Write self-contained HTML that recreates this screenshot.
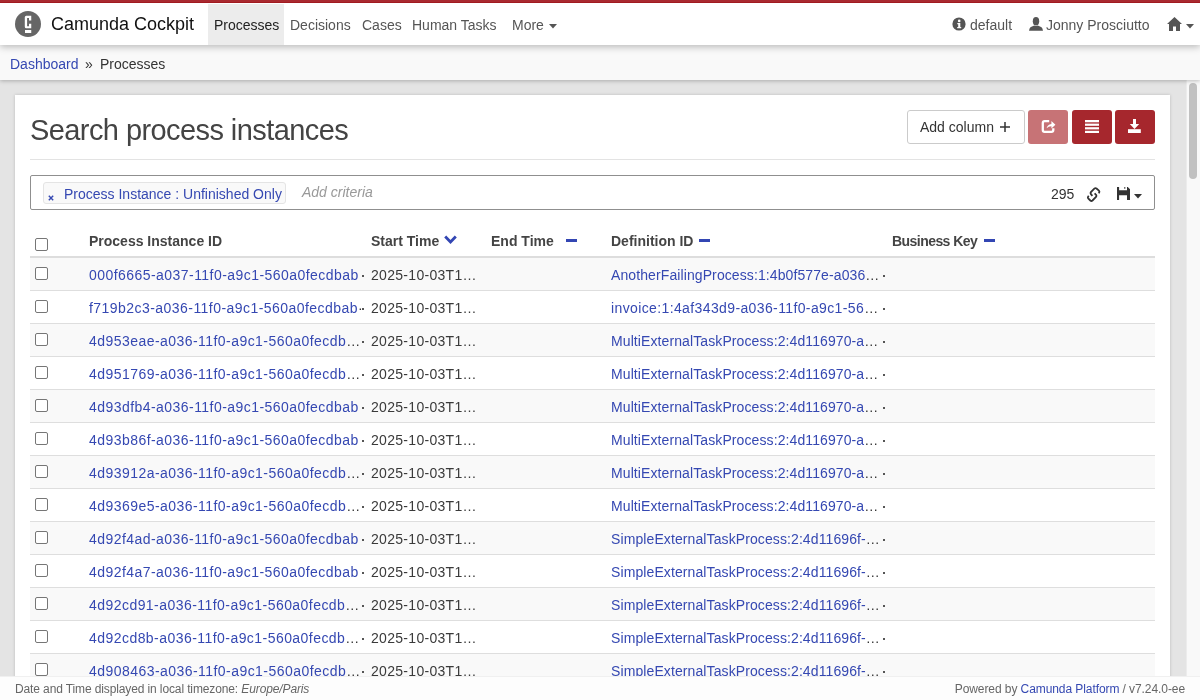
<!DOCTYPE html>
<html><head><meta charset="utf-8">
<style>
*{box-sizing:border-box;margin:0;padding:0}
html,body{width:1200px;height:700px;overflow:hidden;background:#fff;font-family:"Liberation Sans",sans-serif;font-size:14px;color:#333}
a{color:#3548b2;text-decoration:none}
.abs{position:absolute}
#topbar{position:absolute;left:0;top:0;width:1200px;height:3px;background:#a92a30;border-bottom:1px solid #a11a20;z-index:5}
#nav{will-change:transform;position:absolute;left:0;top:3px;width:1200px;height:42px;background:#fff;z-index:3;box-shadow:0 2px 7px rgba(0,0,0,.26)}
.t{position:absolute;white-space:nowrap;line-height:16px}
#crumb{will-change:transform;position:absolute;left:0;top:45px;width:1200px;height:35px;background:#f9f9f9;z-index:2;box-shadow:0 1px 4px rgba(0,0,0,.25)}
#content{position:absolute;left:0;top:80px;width:1200px;height:596px;background:#e4e4e4;overflow:hidden}
#sbar{position:absolute;left:1186px;top:80px;width:14px;height:596px;background:#f9f9f9;border-left:1px solid #ececec;z-index:1}
#thumb{position:absolute;left:1189px;top:83px;width:8px;height:96px;border-radius:4px;background:#c1c1c1;z-index:1}
#panel{position:absolute;left:15px;top:95px;width:1155px;height:700px;background:#fff;box-shadow:0 0 3px rgba(0,0,0,.18)}
#footer{will-change:transform;position:absolute;left:0;top:676px;width:1200px;height:24px;background:#fdfdfd;border-top:1px solid #f0f0f0;z-index:4;font-size:12px;color:#666}
.btn{position:absolute;top:110px;height:34px;border-radius:3px}
.red{background:#a6272d;width:40px}
.row{position:absolute;left:30px;width:1125px;height:33px;border-bottom:1px solid #dedede}
.row.odd{background:#f9f9f9}
.cb{position:absolute;width:13px;height:13px;border:1px solid #767676;border-radius:2px;background:#fff}
.cell{position:absolute;top:9px;white-space:nowrap;overflow:hidden;text-overflow:ellipsis;line-height:16px;color:#3a3a3a}
.dot{position:absolute;top:17px;width:2px;height:2px;background:#555}
.hd{position:absolute;top:233px;font-weight:bold;color:#444;white-space:nowrap;line-height:16px}
#main{position:absolute;left:0;top:0;width:1200px;height:700px;z-index:1;will-change:transform}
.lid{letter-spacing:0.45px}
.ldef{letter-spacing:0.1px}
.st{letter-spacing:0.3px}
.ell{color:#333}
.minus{position:absolute;top:239px;width:11px;height:3px;background:#3346b3}
</style></head><body>
<div id="topbar"></div>
<div id="nav">
  <svg class="abs" style="left:15px;top:8px" width="26" height="26" viewBox="0 0 26 26">
    <circle cx="13" cy="13" r="13" fill="#666"/>
    <path d="M11.3 4.8 H16.25 V9.4 H14 V6.9 H12.1 V15.2 H14 V12.75 H16.25 V17.3 H11.3 Q9.8 17.3 9.8 15.8 V6.3 Q9.8 4.8 11.3 4.8 Z" fill="#fff"/>
    <rect x="10" y="19" width="6.25" height="3" fill="#fff"/>
  </svg>
  <div class="t" style="left:51px;top:11px;font-size:18px;line-height:20px;color:#111">Camunda Cockpit</div>
  <div class="abs" style="left:208px;top:1px;width:76px;height:41px;background:#ececec"></div>
  <div class="t" style="left:214px;top:14px;color:#222">Processes</div>
  <div class="t" style="left:290px;top:14px;color:#555">Decisions</div>
  <div class="t" style="left:362px;top:14px;color:#555">Cases</div>
  <div class="t" style="left:412px;top:14px;color:#555">Human Tasks</div>
  <div class="t" style="left:512px;top:14px;color:#555">More</div>
  <svg class="abs" style="left:549px;top:21px" width="8" height="5"><path d="M0 0H8L4 4.5Z" fill="#555"/></svg>

  <svg class="abs" style="left:952px;top:14px" width="14" height="14" viewBox="0 0 14 14"><circle cx="7" cy="7" r="6.6" fill="#555"/><circle cx="7.2" cy="3.9" r="1.3" fill="#fff"/><path d="M5.3 6H8.3V10H9.2V11.3H5.2V10H6.2V7.2H5.3Z" fill="#fff"/></svg>
  <div class="t" style="left:970px;top:14px;color:#555">default</div>
  <svg class="abs" style="left:1029px;top:14px" width="14" height="14" viewBox="0 0 14 14"><ellipse cx="7" cy="4.2" rx="3.2" ry="4.2" fill="#555"/><path d="M0 13.8 L0.6 11.5 Q1.2 10 3 9.5 L5.2 8.6 Q7 9.6 8.8 8.6 L11 9.5 Q12.8 10 13.4 11.5 L14 13.8 Z" fill="#555"/></svg>
  <div class="t" style="left:1046px;top:14px;color:#555">Jonny Prosciutto</div>
  <svg class="abs" style="left:1167px;top:14px" width="15" height="14" viewBox="0 0 15 14"><path d="M7.5 0 L15 7 H13 V14 H9 V9.5 H6 V14 H2 V7 H0 Z" fill="#555"/></svg>
  <svg class="abs" style="left:1186px;top:21px" width="8" height="5"><path d="M0 0H8L4 4.5Z" fill="#555"/></svg>
</div>

<div id="crumb">
  <div class="t" style="left:10px;top:11px"><a>Dashboard</a></div>
  <div class="t" style="left:85px;top:11px;color:#333">»</div>
  <div class="t" style="left:100px;top:11px;color:#333">Processes</div>
</div>

<div id="content">
</div>
<div id="sbar"></div>
<div id="thumb"></div>
<div id="panel"></div>
<div id="main">
  <div class="t" style="left:30px;top:114px;font-size:29px;line-height:32px;letter-spacing:-0.58px;color:#444">Search process instances</div>
  <div class="abs" style="left:30px;top:159px;width:1125px;height:1px;background:#e3e3e3"></div>
  <div class="btn" style="left:907px;width:118px;border:1px solid #cbcbcb;background:#fff"></div>
  <div class="t" style="left:920px;top:119px;color:#333">Add column</div>
  <svg class="abs" style="left:1000px;top:122px" width="10" height="10" viewBox="0 0 10 10"><path d="M4.25 0H5.75V4.25H10V5.75H5.75V10H4.25V5.75H0V4.25H4.25Z" fill="#333"/></svg>
  <div class="btn red" style="left:1028px;background:#c77376"></div>
  <div class="btn red" style="left:1072px"></div>
  <div class="btn red" style="left:1115px"></div>
  <!-- share icon -->
  <svg class="abs" style="left:1041px;top:119px" width="16" height="16" viewBox="0 0 16 16">
    <path d="M8.2 2.2 H3.6 Q1.8 2.2 1.8 4 V10.9 Q1.8 12.8 3.6 12.8 H10.4 Q12.3 12.8 12.3 10.9 V9.2" fill="none" stroke="#fff" stroke-width="2.3"/>
    <path d="M5.6 9.3 Q6.3 5.6 10.4 4.9 V2 L14.4 5.8 L10.4 9.4 V7.3 Q7.8 7.2 5.6 9.3Z" fill="#fff"/>
  </svg>
  <!-- list icon -->
  <svg class="abs" style="left:1085px;top:120px" width="14" height="13" viewBox="0 0 14 13">
    <rect x="0" y="0" width="14" height="2.3" fill="#fff"/><rect x="0" y="3.6" width="14" height="2.2" fill="#fff"/><rect x="0" y="7.2" width="14" height="2.2" fill="#fff"/><rect x="0" y="10.8" width="14" height="2.2" fill="#fff"/>
  </svg>
  <!-- download icon -->
  <svg class="abs" style="left:1128px;top:119px" width="13" height="14" viewBox="0 0 13 14">
    <path d="M5 0 H8 V5 H11.2 L6.5 10 L1.8 5 H5Z" fill="#fff"/>
    <rect x="0" y="10.2" width="12.8" height="3.8" fill="#fff"/>
  </svg>

  <div class="abs" style="left:30px;top:175px;width:1125px;height:35px;border:1px solid #8f8f8f;border-radius:2px;background:#fff"></div>
  <div class="abs" style="left:43px;top:182px;width:243px;height:22px;border:1px solid #e4e4e4;border-radius:3px;background:#f9f9f9"></div>
  <svg class="abs" style="left:48px;top:195px" width="6" height="6" viewBox="0 0 6 6"><path d="M0.8 0.8L5.2 5.2M5.2 0.8L0.8 5.2" stroke="#3548b2" stroke-width="1.4"/></svg>
  <div class="t" style="left:64px;top:186px"><a>Process Instance : Unfinished Only</a></div>
  <div class="t" style="left:302px;top:184px;font-style:italic;color:#999">Add criteria</div>
  <div class="t" style="left:1051px;top:186px;color:#333">295</div>
  <svg class="abs" style="left:1084px;top:185px" width="20" height="20" viewBox="0 0 20 20">
    <path d="M14.6 8.3 L15.2 7.5 Q15.8 6.5 14.9 5.6 L12.5 3.5 Q11.4 2.7 10.3 3.6 L6.9 7.1 Q6.1 8.2 6.9 9.2 L8.4 10.9" fill="none" stroke="#333" stroke-width="1.8"/>
    <path d="M10.6 8.3 L12.2 10 Q12.8 11 12 12 L8.5 15.5 Q7.4 16.4 6.3 15.5 L4.2 13.4 Q3.5 12.5 4.2 11.5 L4.8 10.8" fill="none" stroke="#333" stroke-width="1.8"/>
  </svg>
  <svg class="abs" style="left:1117px;top:187px" width="13" height="13" viewBox="0 0 13 13">
    <path d="M0 0 H2.1 V3.2 H10 V0 H10.8 L13 2.3 V13 H10 V8.2 H2.1 V13 H0 Z" fill="#333"/>
    <rect x="7.3" y="0" width="1" height="1.8" fill="#333"/>
  </svg>
  <svg class="abs" style="left:1134px;top:194px" width="8" height="5"><path d="M0 0H8L4 4.5Z" fill="#333"/></svg>

  <div class="cb" style="left:35px;top:238px"></div>
  <div class="hd" style="left:89px">Process Instance ID</div>
  <div class="hd" style="left:371px">Start Time</div>
  <svg class="abs" style="left:444px;top:235px" width="13" height="9" viewBox="0 0 13 9"><path d="M1.2 1.5 L6.5 7 L11.8 1.5" fill="none" stroke="#3346b3" stroke-width="2.8"/></svg>
  <div class="hd" style="left:491px">End Time</div>
  <div class="minus" style="left:566px"></div>
  <div class="hd" style="left:611px">Definition ID</div>
  <div class="minus" style="left:699px"></div>
  <div class="hd" style="left:892px;letter-spacing:-0.55px">Business Key</div>
  <div class="minus" style="left:984px"></div>
  <div class="abs" style="left:30px;top:256px;width:1125px;height:2px;background:#dddddd"></div>
  <div class="row odd" style="top:258px">
    <div class="cb" style="left:5px;top:9px"></div>
    <div class="cell" style="left:59px"><a class="lid">000f6665-a037-11f0-a9c1-560a0fecdbab</a></div><div class="dot" style="left:332px"></div>
    <div class="cell st" style="left:341px">2025-10-03T1…</div>
    <div class="cell" style="left:581px"><a class="ldef">AnotherFailingProcess:1:4b0f577e-a036</a><span class="ell">…</span></div><div class="dot" style="left:853px"></div>
  </div>
  <div class="row" style="top:291px">
    <div class="cb" style="left:5px;top:9px"></div>
    <div class="cell" style="left:59px"><a class="lid">f719b2c3-a036-11f0-a9c1-560a0fecdbab</a><span class="ell" style="letter-spacing:-1px">·</span></div><div class="dot" style="left:332px"></div>
    <div class="cell st" style="left:341px">2025-10-03T1…</div>
    <div class="cell" style="left:581px"><a class="ldef" style="letter-spacing:0.38px">invoice:1:4af343d9-a036-11f0-a9c1-56</a><span class="ell">…</span></div><div class="dot" style="left:853px"></div>
  </div>
  <div class="row odd" style="top:324px">
    <div class="cb" style="left:5px;top:9px"></div>
    <div class="cell" style="left:59px"><a class="lid">4d953eae-a036-11f0-a9c1-560a0fecdb</a><span class="ell">…</span></div><div class="dot" style="left:332px"></div>
    <div class="cell st" style="left:341px">2025-10-03T1…</div>
    <div class="cell" style="left:581px"><a class="ldef">MultiExternalTaskProcess:2:4d116970-a</a><span class="ell">…</span></div><div class="dot" style="left:853px"></div>
  </div>
  <div class="row" style="top:357px">
    <div class="cb" style="left:5px;top:9px"></div>
    <div class="cell" style="left:59px"><a class="lid">4d951769-a036-11f0-a9c1-560a0fecdb</a><span class="ell">…</span></div><div class="dot" style="left:332px"></div>
    <div class="cell st" style="left:341px">2025-10-03T1…</div>
    <div class="cell" style="left:581px"><a class="ldef">MultiExternalTaskProcess:2:4d116970-a</a><span class="ell">…</span></div><div class="dot" style="left:853px"></div>
  </div>
  <div class="row odd" style="top:390px">
    <div class="cb" style="left:5px;top:9px"></div>
    <div class="cell" style="left:59px"><a class="lid">4d93dfb4-a036-11f0-a9c1-560a0fecdbab</a></div><div class="dot" style="left:332px"></div>
    <div class="cell st" style="left:341px">2025-10-03T1…</div>
    <div class="cell" style="left:581px"><a class="ldef">MultiExternalTaskProcess:2:4d116970-a</a><span class="ell">…</span></div><div class="dot" style="left:853px"></div>
  </div>
  <div class="row" style="top:423px">
    <div class="cb" style="left:5px;top:9px"></div>
    <div class="cell" style="left:59px"><a class="lid">4d93b86f-a036-11f0-a9c1-560a0fecdbab</a></div><div class="dot" style="left:332px"></div>
    <div class="cell st" style="left:341px">2025-10-03T1…</div>
    <div class="cell" style="left:581px"><a class="ldef">MultiExternalTaskProcess:2:4d116970-a</a><span class="ell">…</span></div><div class="dot" style="left:853px"></div>
  </div>
  <div class="row odd" style="top:456px">
    <div class="cb" style="left:5px;top:9px"></div>
    <div class="cell" style="left:59px"><a class="lid">4d93912a-a036-11f0-a9c1-560a0fecdb</a><span class="ell">…</span></div><div class="dot" style="left:332px"></div>
    <div class="cell st" style="left:341px">2025-10-03T1…</div>
    <div class="cell" style="left:581px"><a class="ldef">MultiExternalTaskProcess:2:4d116970-a</a><span class="ell">…</span></div><div class="dot" style="left:853px"></div>
  </div>
  <div class="row" style="top:489px">
    <div class="cb" style="left:5px;top:9px"></div>
    <div class="cell" style="left:59px"><a class="lid">4d9369e5-a036-11f0-a9c1-560a0fecdb</a><span class="ell">…</span></div><div class="dot" style="left:332px"></div>
    <div class="cell st" style="left:341px">2025-10-03T1…</div>
    <div class="cell" style="left:581px"><a class="ldef">MultiExternalTaskProcess:2:4d116970-a</a><span class="ell">…</span></div><div class="dot" style="left:853px"></div>
  </div>
  <div class="row odd" style="top:522px">
    <div class="cb" style="left:5px;top:9px"></div>
    <div class="cell" style="left:59px"><a class="lid">4d92f4ad-a036-11f0-a9c1-560a0fecdbab</a></div><div class="dot" style="left:332px"></div>
    <div class="cell st" style="left:341px">2025-10-03T1…</div>
    <div class="cell" style="left:581px"><a class="ldef">SimpleExternalTaskProcess:2:4d11696f-</a><span class="ell">…</span></div><div class="dot" style="left:853px"></div>
  </div>
  <div class="row" style="top:555px">
    <div class="cb" style="left:5px;top:9px"></div>
    <div class="cell" style="left:59px"><a class="lid">4d92f4a7-a036-11f0-a9c1-560a0fecdbab</a></div><div class="dot" style="left:332px"></div>
    <div class="cell st" style="left:341px">2025-10-03T1…</div>
    <div class="cell" style="left:581px"><a class="ldef">SimpleExternalTaskProcess:2:4d11696f-</a><span class="ell">…</span></div><div class="dot" style="left:853px"></div>
  </div>
  <div class="row odd" style="top:588px">
    <div class="cb" style="left:5px;top:9px"></div>
    <div class="cell" style="left:59px"><a class="lid">4d92cd91-a036-11f0-a9c1-560a0fecdb</a><span class="ell">…</span></div><div class="dot" style="left:332px"></div>
    <div class="cell st" style="left:341px">2025-10-03T1…</div>
    <div class="cell" style="left:581px"><a class="ldef">SimpleExternalTaskProcess:2:4d11696f-</a><span class="ell">…</span></div><div class="dot" style="left:853px"></div>
  </div>
  <div class="row" style="top:621px">
    <div class="cb" style="left:5px;top:9px"></div>
    <div class="cell" style="left:59px"><a class="lid">4d92cd8b-a036-11f0-a9c1-560a0fecdb</a><span class="ell">…</span></div><div class="dot" style="left:332px"></div>
    <div class="cell st" style="left:341px">2025-10-03T1…</div>
    <div class="cell" style="left:581px"><a class="ldef">SimpleExternalTaskProcess:2:4d11696f-</a><span class="ell">…</span></div><div class="dot" style="left:853px"></div>
  </div>
  <div class="row odd" style="top:654px">
    <div class="cb" style="left:5px;top:9px"></div>
    <div class="cell" style="left:59px"><a class="lid">4d908463-a036-11f0-a9c1-560a0fecdb</a><span class="ell">…</span></div><div class="dot" style="left:332px"></div>
    <div class="cell st" style="left:341px">2025-10-03T1…</div>
    <div class="cell" style="left:581px"><a class="ldef">SimpleExternalTaskProcess:2:4d11696f-</a><span class="ell">…</span></div><div class="dot" style="left:853px"></div>
  </div>
</div>
<div id="footer">
  <div class="t" style="left:15px;top:5px;line-height:14px;letter-spacing:-0.12px">Date and Time displayed in local timezone: <i>Europe/Paris</i></div>
  <div class="t" style="right:15px;top:5px;line-height:14px;letter-spacing:-0.08px">Powered by <a>Camunda Platform</a> / v7.24.0-ee</div>
</div>
</body></html>
